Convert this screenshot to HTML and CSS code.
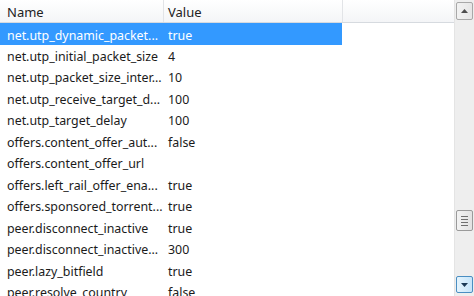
FILE: index.html
```html
<!DOCTYPE html>
<html>
<head>
<meta charset="utf-8">
<link rel="stylesheet" href="styles.css">
</head>
<body>
<div class="view">
  <div class="table">
    <div class="header">
      <div class="hcell">Name</div>
      <div class="hcell hval">Value</div>
      <div class="hcell hrest"></div>
    </div>
    <div class="rows">
      <div class="row sel"><div class="name">net.utp_dynamic_packet...</div><div class="val">true</div></div>
      <div class="row"><div class="name">net.utp_initial_packet_size</div><div class="val">4</div></div>
      <div class="row"><div class="name">net.utp_packet_size_inter...</div><div class="val">10</div></div>
      <div class="row"><div class="name">net.utp_receive_target_d...</div><div class="val">100</div></div>
      <div class="row"><div class="name">net.utp_target_delay</div><div class="val">100</div></div>
      <div class="row"><div class="name">offers.content_offer_aut...</div><div class="val">false</div></div>
      <div class="row"><div class="name">offers.content_offer_url</div><div class="val"></div></div>
      <div class="row"><div class="name">offers.left_rail_offer_ena...</div><div class="val">true</div></div>
      <div class="row"><div class="name">offers.sponsored_torrent...</div><div class="val">true</div></div>
      <div class="row"><div class="name">peer.disconnect_inactive</div><div class="val">true</div></div>
      <div class="row"><div class="name">peer.disconnect_inactive...</div><div class="val">300</div></div>
      <div class="row"><div class="name">peer.lazy_bitfield</div><div class="val">true</div></div>
      <div class="row"><div class="name">peer.resolve_country</div><div class="val">false</div></div>
    </div>
  </div>
  <div class="scrollbar">
    <div class="sbtn up">
      <svg width="7" height="4" viewBox="0 0 7 4"><path d="M0 4 L3.5 0 L7 4 Z" fill="#4d4d4d"/></svg>
    </div>
    <div class="track">
      <div class="thumb">
        <span></span><span></span><span></span><span></span>
      </div>
    </div>
    <div class="sbtn down">
      <svg width="7" height="4" viewBox="0 0 7 4"><path d="M0 0 L7 0 L3.5 4 Z" fill="#1c3a55"/></svg>
    </div>
  </div>
</div>
</body>
</html>
```

FILE: styles.css
```css
html, body {
  margin: 0;
  padding: 0;
  background: #ffffff;
}
body {
  font-family: "Noto Sans", "Open Sans", sans-serif;
  font-size: 12.4px;
  color: #1b1b1b;
  overflow: hidden;
}
.view {
  width: 474px;
  height: 296px;
  display: flex;
  overflow: hidden;
}
.table {
  flex: 1;
  display: flex;
  flex-direction: column;
  overflow: hidden;
}
.header {
  height: 22px;
  flex: none;
  display: grid;
  grid-template-columns: 164px 179px 1fr;
  background: linear-gradient(#ffffff, #f4f5f7);
  border-bottom: 1px solid #d6dadf;
}
.hcell {
  display: flex;
  align-items: center;
  padding-left: 7px;
  border-right: 1px solid #e2e4e7;
  color: #222;
  font-size: 13px;
  padding-top: 1px;
}
.hval {
  padding-left: 4px;
}
.hrest {
  border-right: none;
}
.rows {
  display: flex;
  flex-direction: column;
}
.row {
  height: 21.5px;
  flex: none;
  display: grid;
  grid-template-columns: 164px 178px;
  width: 342px;
  align-items: center;
  white-space: nowrap;
}
.row .name {
  padding-left: 7px;
  padding-top: 2px;
}
.row .val {
  padding-left: 4px;
  padding-top: 2px;
}
.row.sel {
  background: #3399ff;
  color: #ffffff;
  height: 22px;
  margin-bottom: -0.5px;
}
.scrollbar {
  width: 20px;
  flex: none;
  background: #eeeeee;
  border-left: 1px solid #e4e4e4;
  display: flex;
  flex-direction: column;
  padding-top: 2px;
  box-sizing: border-box;
}
.sbtn {
  height: 18px;
  margin: 0 1px 0 1px;
  border: 1px solid #a8a8a8;
  border-radius: 2px;
  background: linear-gradient(90deg, #f2f2f2, #e6e6e6);
  display: flex;
  align-items: center;
  justify-content: center;
  box-sizing: border-box;
  flex: none;
}
.sbtn.down {
  border-color: #4a8ec2;
  background: linear-gradient(90deg, #e5f4fd, #c6e5fa);
  height: 17px;
  margin-bottom: 3px;
}
.track {
  flex: 1;
  position: relative;
}
.thumb {
  position: absolute;
  left: 1px;
  right: 1px;
  top: 190px;
  height: 21px;
  border: 1px solid #9a9a9a;
  border-radius: 2px;
  background: linear-gradient(90deg, #f3f3f3, #e2e2e2);
  box-sizing: border-box;
  display: flex;
  flex-direction: column;
  align-items: center;
  justify-content: center;
  gap: 2px;
}
.thumb span {
  display: block;
  width: 7px;
  height: 1px;
  background: #6f6f6f;
}
```
